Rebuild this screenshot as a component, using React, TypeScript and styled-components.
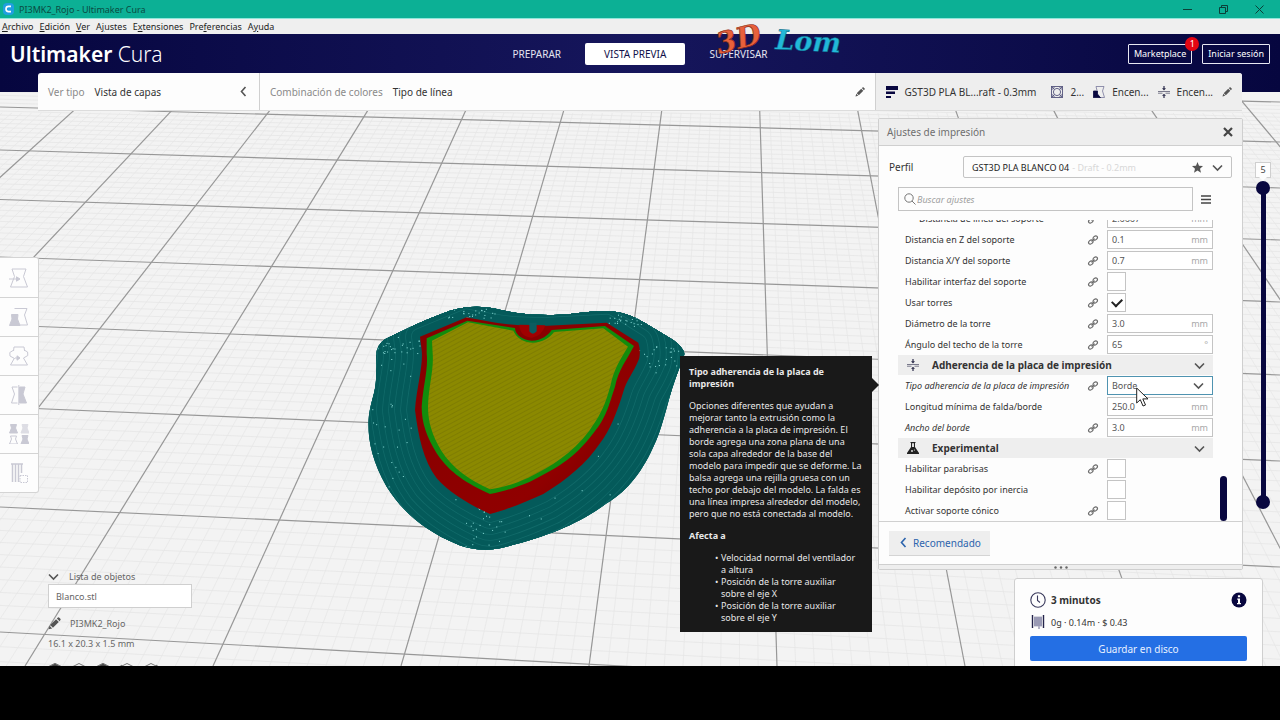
import React, { useState } from "react";
import styled, { createGlobalStyle, css } from "styled-components";

const navy = "#08073f";
const ink = "#333333";
const grey = "#8a8a8a";
const line = "#c4c4c4";

const GlobalStyle = createGlobalStyle`
  * { box-sizing: border-box; }
  body { margin: 0; background: #000; font-family: "Noto Sans", "Open Sans", sans-serif; font-size: 9px; color: ${ink}; }
  button, input, select { font: inherit; color: inherit; margin: 0; }
  button { padding: 0; border: 0; background: none; }
`;

/* ---------- window frame ---------- */

const Window = styled.div`
  display: flex;
  flex-direction: column;
  height: 100vh;
  overflow: hidden;
`;

const TitleBar = styled.header`
  flex: none;
  display: flex;
  align-items: center;
  gap: 5px;
  height: 19px;
  padding: 0 16px 0 3px;
  background: #0cb095;
  border-bottom: 1px solid #8fe6da;
  color: #0b4a42;
  white-space: nowrap;
`;

const WindowTitle = styled.span`
  flex: 1;
`;

const WindowButton = styled.button`
  display: flex;
  margin-left: 22px;
`;

const MenuBar = styled.nav`
  flex: none;
  display: flex;
  align-items: center;
  gap: 6px;
  height: 15px;
  padding-left: 2px;
  background: #efefef;
  color: #1e1e1e;
`;

const MenuItem = styled.button`
  line-height: 14px;
`;

const Stage = styled.main`
  position: relative;
  flex: 1;
  min-height: 0;
  display: flex;
  flex-direction: column;
  overflow: hidden;
  background: #f3f3f3;
`;

const Scene = styled.svg`
  position: absolute;
  inset: 0;
  width: 100%;
  height: 100%;
`;

const BottomBand = styled.div`
  flex: none;
  height: 54px;
  background: #000;
`;

/* ---------- app header ---------- */

const AppHeader = styled.div`
  position: relative;
  flex: none;
  display: grid;
  grid-template-columns: 1fr auto 1fr;
  align-items: center;
  height: 58px;
  padding: 0 10px 19px;
  background: linear-gradient(90deg, #06063f 0%, #16165c 50%, #06063f 100%);
  color: #fff;
`;

const Brand = styled.div`
  font-size: 21px;
  line-height: 24px;
  font-weight: 600;
`;

const BrandLight = styled.span`
  font-weight: 300;
`;

const Stages = styled.nav`
  display: flex;
  gap: 5px;
`;

const StageTab = styled.button<{ $active?: boolean }>`
  height: 22px;
  padding: 0 19px;
  border-radius: 2px;
  font-size: 10px;
  color: ${(p) => (p.$active ? "#10104a" : "#e4e4f0")};
  background: ${(p) => (p.$active ? "#fff" : "transparent")};
`;

const Account = styled.div`
  justify-self: end;
  display: flex;
  gap: 10px;
`;

const OutlineButton = styled.button`
  position: relative;
  height: 20px;
  padding: 0 5px;
  border: 1px solid #e8e8f2;
  border-radius: 1px;
  color: #fff;
`;

const Badge = styled.span`
  position: absolute;
  top: -8px;
  right: -8px;
  width: 14px;
  height: 14px;
  border-radius: 7px;
  line-height: 14px;
  background: #e30613;
`;

const Watermark = styled.svg`
  position: absolute;
  left: 715px;
  top: 18px;
`;

/* ---------- view bar ---------- */

const ViewBar = styled.div`
  position: relative;
  flex: none;
  display: flex;
  height: 38px;
  margin: -19px 38px 0;
  border-radius: 3px 3px 0 0;
  background: #fdfdfd;
  border-bottom: 1px solid #dcdcdc;
  overflow: hidden;
  font-size: 10px;
  white-space: nowrap;
`;

const BarSection = styled.button<{ $kind: "view" | "scheme" | "print" }>`
  display: flex;
  align-items: center;
  text-align: left;
  gap: 10px;
  padding: 0 10px;
  ${(p) => p.$kind === "view" && css`flex: 0 0 221px;`}
  ${(p) =>
    p.$kind === "scheme" &&
    css`
      flex: 1;
      border-left: 1px solid #d0d0d0;
    `}
  ${(p) =>
    p.$kind === "print" &&
    css`
      flex: 0 0 366px;
      gap: 7px;
      background: #eeeeee;
      border-left: 1px solid #d0d0d0;
    `}
`;

const Muted = styled.span`
  color: ${grey};
`;

const Push = styled.span`
  flex: 1;
`;

const Summary = styled.span<{ $role?: "profile" | "last" }>`
  flex: ${(p) => (p.$role === "last" ? "1" : "none")};
  margin-right: ${(p) => (p.$role === "profile" ? "8px" : "2px")};
`;

/* ---------- body ---------- */

const Body = styled.div`
  position: relative;
  flex: 1;
  min-height: 0;
  display: flex;
  justify-content: space-between;
  align-items: flex-start;
`;

const LeftSide = styled.div`
  display: flex;
  flex-direction: column;
  padding-top: 146px;
`;

const Tools = styled.div`
  width: 39px;
  background: #fdfdfd;
  border: 1px solid #d4d4d4;
  border-left: 0;
  border-radius: 0 3px 3px 0;
`;

const Tool = styled.button`
  display: flex;
  align-items: center;
  justify-content: center;
  width: 100%;
  height: 39px;
  color: #c9c9d4;
  & + & {
    border-top: 1px solid #d4d4d4;
  }
`;

const Objects = styled.section`
  display: flex;
  flex-direction: column;
  align-items: flex-start;
  margin: 75px 0 0 48px;
  color: #666;
`;

const ObjectsToggle = styled.button`
  display: flex;
  align-items: center;
  gap: 10px;
  height: 16px;
`;

const ObjectItem = styled.button`
  width: 144px;
  height: 24px;
  padding-left: 7px;
  text-align: left;
  background: #fff;
  border: 1px solid #cfcfcf;
`;

const JobName = styled.div`
  display: flex;
  align-items: center;
  gap: 9px;
  height: 30px;
`;

const Dimensions = styled.div`
  line-height: 12px;
`;

const Views = styled.div`
  display: flex;
  gap: 10px;
  margin-top: 13px;
`;

const RightSide = styled.div`
  display: flex;
  flex-direction: column;
  padding-top: 7px;
`;

const PanelRow = styled.div`
  display: flex;
`;

const Panel = styled.section`
  position: relative;
  width: 365px;
  background: #fdfdfd;
  border: 1px solid #cfcfcf;
  border-radius: 2px;
`;

const PanelHeader = styled.div`
  display: flex;
  align-items: center;
  justify-content: space-between;
  height: 27px;
  padding: 0 8px;
  background: #eeeeee;
  border-bottom: 1px solid #cfcfcf;
  font-size: 10px;
  color: #6f6f6f;
`;

const ProfileRow = styled.div`
  display: flex;
  align-items: center;
  justify-content: space-between;
  height: 22px;
  margin: 10px 10px 0;
  font-size: 10px;
`;

const ProfileButton = styled.button`
  display: flex;
  align-items: center;
  width: 269px;
  height: 22px;
  padding: 0 8px;
  border: 1px solid ${line};
  border-radius: 2px;
  font-size: 9px;
  color: #222;
`;

const ProfileHint = styled.span`
  flex: 1;
  padding-left: 3px;
  text-align: left;
  color: #d8d8d8;
`;

const Star = styled.svg`
  margin-right: 9px;
`;

const SearchRow = styled.div`
  display: flex;
  align-items: center;
  gap: 7px;
  margin: 9px 0 0 19px;
`;

const SearchBox = styled.label`
  display: flex;
  align-items: center;
  gap: 1px;
  width: 295px;
  height: 24px;
  padding-left: 5px;
  border: 1px solid ${line};
  color: #909090;
`;

const SearchInput = styled.input`
  flex: 1;
  min-width: 0;
  border: 0;
  outline: 0;
  padding: 0;
  background: none;
  &::placeholder {
    font-style: italic;
    color: #a0a0a0;
  }
`;

const IconButton = styled.button`
  display: flex;
  padding: 1px;
`;

const ListArea = styled.div`
  display: flex;
  justify-content: space-between;
  align-items: flex-end;
  height: 301px;
  margin-top: 9px;
  padding: 0 15px 0 19px;
  overflow: hidden;
`;

const List = styled.div`
  width: 315px;
`;

const ScrollThumb = styled.div`
  width: 7px;
  height: 45px;
  border-radius: 4px;
  background: ${navy};
`;

const Category = styled.button`
  display: flex;
  align-items: center;
  gap: 13px;
  width: 100%;
  height: 20px;
  padding: 0 8px 0 9px;
  background: #eeeeee;
  font-size: 10px;
  font-weight: 700;
`;

const CategoryName = styled.span`
  flex: 1;
  text-align: left;
`;

const Row = styled.div`
  display: grid;
  grid-template-columns: 1fr 24px 106px;
  align-items: center;
  height: 21px;
  padding-left: 7px;
`;

const RowLabel = styled.label<{ $italic?: boolean; $indent?: boolean }>`
  font-style: ${(p) => (p.$italic ? "italic" : "normal")};
  padding-left: ${(p) => (p.$indent ? "14px" : "0")};
  white-space: nowrap;
`;

const LinkCell = styled.span`
  display: flex;
  padding-left: 4px;
`;

const Field = styled.div<{ $focus?: boolean }>`
  display: flex;
  align-items: center;
  height: 19px;
  padding: 0 4px;
  background: #fff;
  border: 1px solid ${(p) => (p.$focus ? "#4f93b0" : line)};
  ${(p) => p.$focus && css`padding-right: 8px;`}
`;

const FieldInput = styled.input`
  flex: 1;
  min-width: 0;
  border: 0;
  outline: 0;
  padding: 0;
  background: none;
  color: #555;
`;

const FieldSelect = styled.select`
  flex: 1;
  appearance: none;
  border: 0;
  outline: 0;
  padding: 0;
  background: none;
  color: #555;
`;

const Unit = styled.span`
  color: #a8a8a8;
`;

const Check = styled.input`
  appearance: none;
  display: grid;
  place-items: center;
  width: 19px;
  height: 19px;
  background: #fff;
  border: 1px solid ${line};
  &:checked::before {
    content: "";
    width: 8px;
    height: 5px;
    margin-bottom: 3px;
    border: solid #222;
    border-width: 0 0 2px 2px;
    transform: rotate(-45deg);
  }
`;

const PanelFooter = styled.div`
  display: flex;
  align-items: center;
  height: 44px;
  padding-left: 10px;
  border-top: 1px solid #d0d0d0;
  border-bottom: 1px solid #cfcfcf;
`;

const Recommended = styled.button`
  display: flex;
  align-items: center;
  gap: 4px;
  height: 25px;
  padding: 0 9px;
  background: #eeeeee;
  border-bottom: 1px solid #d4d4d4;
  font-size: 10px;
  color: #2c64ad;
`;

const ResizeGrip = styled.div`
  display: flex;
  align-items: center;
  justify-content: center;
  height: 4px;
  background: #eeeeee;
`;

/* ---------- tooltip ---------- */

const Tooltip = styled.aside`
  position: absolute;
  top: 237px;
  right: calc(100% + 7px);
  width: 192px;
  padding: 10px 8px 8px 9px;
  background: #191919;
  color: #e8e8e8;
  line-height: 12px;
  &::after {
    content: "";
    position: absolute;
    top: 22px;
    left: 100%;
    border: 7px solid transparent;
    border-left-color: #191919;
    border-right-width: 0;
  }
`;

const TipTitle = styled.h2`
  margin: 0;
  font-size: 9px;
  font-weight: 700;
`;

const TipText = styled.p`
  margin: 10px 0;
`;

const TipList = styled.ul`
  list-style: none;
  margin: 10px 0 0;
  padding: 0 6px 0 32px;
`;

const TipItem = styled.li`
  &::before {
    content: "•";
    float: left;
    margin-left: -6px;
  }
`;

const Pointer = styled.svg`
  position: absolute;
  left: 257px;
  top: 268px;
`;

/* ---------- layer slider ---------- */

const LayerSlider = styled.div`
  display: flex;
  flex-direction: column;
  align-items: center;
  margin: 44px 9px 0 12px;
`;

const LayerLabel = styled.output`
  position: relative;
  width: 16px;
  height: 16px;
  text-align: center;
  line-height: 14px;
  background: #fdfdfd;
  border: 1px solid #cfcfcf;
  color: #444;
  &::after {
    content: "";
    position: absolute;
    top: 14px;
    left: 3px;
    border: 4px solid transparent;
    border-top-color: #fdfdfd;
    border-bottom-width: 0;
  }
`;

const Track = styled.div`
  position: relative;
  width: 14px;
  height: 328px;
  margin-top: 3px;
  background: linear-gradient(90deg, transparent 5px, ${navy} 5px, ${navy} 10px, transparent 10px);
  background-size: 100% 314px;
  background-position: 0 7px;
  background-repeat: no-repeat;
`;

const LayerRange = styled.input`
  appearance: none;
  position: absolute;
  inset: 0;
  width: 14px;
  height: 328px;
  writing-mode: vertical-lr;
  direction: rtl;
  background: none;
  pointer-events: none;
  &::-webkit-slider-thumb {
    appearance: none;
    pointer-events: auto;
    width: 14px;
    height: 14px;
    border-radius: 7px;
    background: ${navy};
  }
`;

/* ---------- job panel ---------- */

const Job = styled.section`
  align-self: flex-end;
  width: 249px;
  height: 120px;
  margin: 8px 17px 0 0;
  padding: 10px 15px;
  background: #fdfdfd;
  border: 1px solid #cfcfcf;
  border-radius: 3px;
`;

const JobLine = styled.div<{ $strong?: boolean }>`
  display: flex;
  align-items: center;
  gap: 5px;
  height: 22px;
  font-size: ${(p) => (p.$strong ? "10px" : "9px")};
  font-weight: ${(p) => (p.$strong ? 700 : 400)};
`;

const SaveButton = styled.button`
  width: 100%;
  height: 25px;
  margin-top: 3px;
  border-radius: 2px;
  background: #246fe4;
  font-size: 10px;
  color: #e9f1ff;
`;

/* ---------- icons ---------- */

const Chevron = ({ dir = "down", color = "#555" }: { dir?: "down" | "left"; color?: string }) => (
  <svg width="11" height="11" viewBox="0 0 11 11" fill="none" stroke={color} strokeWidth="1.6">
    <path d={dir === "down" ? "M1 3.5 5.5 8 10 3.5" : "M7.5 1 3.5 5.5 7.5 10"} />
  </svg>
);

const LinkIcon = () => (
  <svg width="12" height="12" viewBox="0 0 12 12" fill="none" stroke="#6a6a6a" strokeWidth="1.2">
    <ellipse cx="3.8" cy="8" rx="2.4" ry="1.8" transform="rotate(-40 3.8 8)" />
    <ellipse cx="8.2" cy="4" rx="2.4" ry="1.8" transform="rotate(-40 8.2 4)" />
    <path d="M4.4 7.4 7.6 4.6" />
  </svg>
);

const Pencil = ({ size = 10 }: { size?: number }) => (
  <svg width={size} height={size} viewBox="0 0 10 10" fill="#555">
    <path d="M0.5 9.5 1.2 6.8 3.2 8.8Z M1.7 6.2 6.2 1.7 8.3 3.8 3.8 8.3Z M6.8 1.1 7.6.4Q8.1 0 8.7.5L9.5 1.3Q10 1.9 9.6 2.4L8.9 3.2Z" />
  </svg>
);

const AdhesionIcon = () => (
  <svg width="12" height="12" viewBox="0 0 12 12" fill="none" stroke="#2b2b4a" strokeWidth="1">
    <path d="M0 5.5H12M0 7.2H4.5M7.5 7.2H12" opacity=".6" />
    <path d="M6 0V3M6 12V9" strokeWidth="1.2" />
    <path d="M4 2.2H8L6 4.5ZM4 9.8H8L6 7.8Z" fill="#2b2b4a" stroke="none" />
  </svg>
);

const FlaskIcon = () => (
  <svg width="12" height="12" viewBox="0 0 12 12" fill="#222">
    <path d="M3.5 0H8.5V1H8V5L12 11V12H0V11L4 5V1H3.5Z" />
    <path d="M5 1.2H7V5H5Z" fill="#ddd" />
    <circle cx="5" cy="9" r=".9" fill="#eee" />
    <circle cx="7.4" cy="8" r=".6" fill="#eee" />
  </svg>
);

const LayersIcon = () => (
  <svg width="12" height="12" viewBox="0 0 12 12" fill={navy}>
    <path d="M0 0H12V4H0ZM0 5.5H9V8H0ZM0 10H5V12H0Z" />
  </svg>
);

const InfillIcon = () => (
  <svg width="12" height="12" viewBox="0 0 12 12" fill="none" stroke="#55557d" strokeWidth=".9">
    <rect x=".5" y=".5" width="11" height="11" />
    <path d="M.5 4 4 .5M8 .5 11.5 4M11.5 8 8 11.5M4 11.5.5 8M.5.5 3.5 3.5M11.5.5 8.5 3.5M.5 11.5 3.5 8.5M11.5 11.5 8.5 8.5" />
    <circle cx="6" cy="6" r="3.6" />
  </svg>
);

const SupportIcon = () => (
  <svg width="12" height="12" viewBox="0 0 12 12" fill="none" stroke="#77779a" strokeWidth=".8">
    <path d="M3 .5H11L9.5 5 11.5 11.5H6" />
    <path d="M.5 5H4.5V8L7.5 11.8H.5Z" fill={navy} stroke={navy} />
    <path d="M3 .5 4 4.5" />
  </svg>
);

const tower = "M3 1H17L14.5 8.5 18.5 19H1.5L5.5 8.5Z";

const ToolIcon = ({ kind }: { kind: string }) => (
  <svg width="20" height="20" viewBox="0 0 20 20" fill="none" stroke="currentColor" strokeWidth="1">
    {kind === "mover" && (
      <>
        <path d={tower} />
        <path d="M0 11H8" />
        <path d="M7.5 8.8 11 11 7.5 13.2Z" fill="currentColor" />
      </>
    )}
    {kind === "escalar" && (
      <>
        <path d="M5.5 1.5H18L15.5 8 18.5 18H11" />
        <path d="M2.5 7.5H9L8.5 12 11 18.5H.5L3 12Z" fill="currentColor" />
      </>
    )}
    {kind === "rotar" && (
      <>
        <path d="M5 1H15L15.6 5M14.5 12 18.5 19H1.5L5.5 12M4.5 5 5 1" />
        <path d="M5.5 12.5 1 10 .8 6.5 4 4.5M14.5 12 18.8 9.5 18.6 6 16 4.5" />
        <path d="M6 12H8" />
        <path d="M8 9.8 11 12 8 14.2Z" fill="currentColor" />
      </>
    )}
    {kind === "espejo" && (
      <>
        <path d="M8.5 2H3L5.5 9 2.5 18H8.5" />
        <path d="M10.5 2H16L14 9 17.5 18H10.5Z" fill="currentColor" />
        <path d="M9.8 0V20" />
      </>
    )}
    {kind === "modelo" && (
      <>
        <path d="M1.5.5H7.5L6.5 4 8.5 9H.5L2.5 4Z" fill="currentColor" />
        <path d="M13 .5H19L18 4 20 9H12L14 4Z" fill="currentColor" opacity=".6" />
        <path d="M1.5 12H7.5L6.5 15 8.5 20H.5L2.5 15Z" />
        <path d="M13 11.5H19L18 15 20 20H12L14 15Z" fill="currentColor" />
      </>
    )}
    {kind === "soportes" && (
      <>
        <path d="M2 1H14M3.5 1V19M6.5 1V19M9.5 1V19M12.5 1V10" strokeWidth="1.5" />
        <path d="M11 12.5H18.5V19.5H11Z" strokeDasharray="1.5 1" />
      </>
    )}
  </svg>
);

/* ---------- 3D scene ---------- */

const verticals = Array.from({ length: 171 }, (_, n) => {
  const i = n / 10 - 2;
  return { x1: 71 + 98.4 * i, x2: 25 + 188 * (i - 3), major: n % 10 === 0 };
});

const leftEdge = [70, 107, 150, 199.5, 257, 325, 407, 507, 632, 790];
const rightEdge = [102, 142, 188, 240, 302, 375, 461, 567, 702, 870];

const horizontals = leftEdge.slice(0, -1).flatMap((y, i) =>
  Array.from({ length: 10 }, (_, k) => {
    const t = k / 10;
    const s = t * (0.92 + 0.08 * t);
    return {
      y1: y + (leftEdge[i + 1] - y) * s,
      y2: rightEdge[i] + (rightEdge[i + 1] - rightEdge[i]) * s,
      major: k === 0,
    };
  })
);

const brim =
  "M48 200Q48 165 75 148C150 110 220 80 270 62Q340 42 400 55C470 72 520 76 580 75C640 75 680 62 745 64C800 66 830 85 870 108L940 150Q970 172 974 192C965 215 948 260 935 300C920 350 905 420 880 470C840 560 790 610 740 640C650 705 560 740 420 775C370 785 320 775 290 762C200 725 130 670 80 590C40 520 25 460 25 400C28 340 45 320 48 270Z";
const wall =
  "M180 140 320 82C360 90 420 103 480 106L548 108 740 98 835 158Q842 180 838 205C820 250 800 270 790 305C770 370 750 420 720 460C680 520 620 570 550 612C500 635 440 660 390 672C330 645 270 610 230 565C190 510 175 440 165 360C170 290 190 230 185 180Z";
const inner =
  "M200 145 322 92 465 114C465 135 490 150 515 152C545 152 565 135 575 120L735 108 822 168C800 210 775 240 765 290C745 350 740 380 700 430C640 510 580 540 510 575C460 595 430 605 390 612C320 580 270 550 230 490C200 440 185 400 185 350C190 280 205 240 200 190Z";
const skin =
  "M216 152 324 97 460 122C470 146 495 158 518 158C548 158 568 144 582 126L730 115 804 170C780 210 760 240 752 285C735 345 725 370 688 422C635 492 575 528 505 563C460 583 425 594 390 598C330 570 280 538 244 482C216 436 204 395 204 350C206 285 222 240 218 190Z";

const sparks = Array.from({ length: 210 }, (_, i) => {
  const spots = [
    [110, 170, 70, 20], [880, 200, 80, 35], [375, 710, 60, 60], [330, 70, 90, 14],
    [790, 90, 60, 20], [95, 400, 60, 220], [500, 400, 470, 370], [500, 420, 470, 370],
  ];
  const [cx, cy, rx, ry] = spots[i % spots.length];
  const a = Math.sin(i * 127.1) * 43758.5453;
  const b = Math.sin(i * 311.7) * 24634.6345;
  return { x: cx + rx * 2 * (a - Math.floor(a) - 0.5), y: cy + ry * 2 * (b - Math.floor(b) - 0.5) };
});

const BuildPlate = () => (
  <Scene viewBox="0 34 1280 632" preserveAspectRatio="xMidYMid slice" aria-hidden="true">
    <defs>
      <clipPath id="brimClip"><path d={brim} /></clipPath>
      <pattern id="hatch" width="12" height="12" patternUnits="userSpaceOnUse" patternTransform="rotate(-28)">
        <rect width="12" height="12" fill="#8b8900" />
        <rect width="12" height="3" fill="#7f7d02" />
      </pattern>
      <linearGradient id="wallShade" x1="0" y1="0" x2="1" y2="1">
        <stop offset="0" stopColor="#850000" />
        <stop offset=".7" stopColor="#900000" />
        <stop offset="1" stopColor="#6a0000" />
      </linearGradient>
    </defs>
    <g stroke="#e6e6e6" strokeWidth=".8">
      {verticals.filter((v) => !v.major).map((v, i) => <line key={i} x1={v.x1} y1="113" x2={v.x2} y2="666" opacity=".8" />)}
      {horizontals.filter((h) => !h.major).map((h, i) => <line key={i} x1="0" y1={h.y1} x2="1280" y2={h.y2} />)}
    </g>
    <g stroke="#979797" strokeWidth="1.2">
      {verticals.filter((v) => v.major).map((v, i) => (
        <line key={i} x1={v.x1 - (v.x2 - v.x1) * 0.05} y1="85.35" x2={v.x2} y2="666" />
      ))}
      {horizontals.filter((h) => h.major).map((h, i) => <line key={i} x1="0" y1={h.y1} x2="1280" y2={h.y2} />)}
    </g>
    <g transform="translate(360 290) scale(.33333)">
      <path d={brim} fill="#045a5a" />
      <g clipPath="url(#brimClip)" fill="none" strokeLinejoin="round">
        {[300, 264, 228, 192, 156, 120, 84, 48].map((w) => (
          <React.Fragment key={w}>
            <path d={wall} stroke="#116a69" strokeWidth={w + 5} />
            <path d={wall} stroke="#045a5a" strokeWidth={w} />
          </React.Fragment>
        ))}
        <g fill="#8fe0dc">
          {sparks.map((s, i) => <rect key={i} x={s.x} y={s.y} width="3" height="3" />)}
        </g>
      </g>
      <path d={wall} fill="url(#wallShade)" />
      <path d={inner} fill="#128c0c" />
      <path d="M478 104Q480 140 515 143Q545 140 556 106Z" fill="#a00000" />
      <path d="M508 98H530V124Q518 138 508 124Z" fill="#0c5c60" />
      <path d={skin} fill="url(#hatch)" />
    </g>
  </Scene>
);

/* ---------- settings data ---------- */

type Setting =
  | { type: "category"; name: string; icon: "adhesion" | "flask" }
  | { type: "value"; name: string; value: string; unit: string; link?: boolean; italic?: boolean; indent?: boolean }
  | { type: "check"; name: string; on?: boolean; link?: boolean }
  | { type: "select"; name: string; options: string[] };

const settings: Setting[] = [
  { type: "value", name: "Distancia de línea del soporte", value: "2.6667", unit: "mm", link: true, indent: true },
  { type: "value", name: "Distancia en Z del soporte", value: "0.1", unit: "mm", link: true },
  { type: "value", name: "Distancia X/Y del soporte", value: "0.7", unit: "mm", link: true },
  { type: "check", name: "Habilitar interfaz del soporte", link: true },
  { type: "check", name: "Usar torres", on: true, link: true },
  { type: "value", name: "Diámetro de la torre", value: "3.0", unit: "mm", link: true },
  { type: "value", name: "Ángulo del techo de la torre", value: "65", unit: "°", link: true },
  { type: "category", name: "Adherencia de la placa de impresión", icon: "adhesion" },
  { type: "select", name: "Tipo adherencia de la placa de impresión", options: ["Borde", "Falda", "Balsa", "Ninguno"] },
  { type: "value", name: "Longitud mínima de falda/borde", value: "250.0", unit: "mm" },
  { type: "value", name: "Ancho del borde", value: "3.0", unit: "mm", link: true, italic: true },
  { type: "category", name: "Experimental", icon: "flask" },
  { type: "check", name: "Habilitar parabrisas", link: true },
  { type: "check", name: "Habilitar depósito por inercia" },
  { type: "check", name: "Activar soporte cónico", link: true },
];

const SettingRow = ({ item, id }: { item: Setting; id: string }) => {
  if (item.type === "category") {
    return (
      <Category>
        {item.icon === "adhesion" ? <AdhesionIcon /> : <FlaskIcon />}
        <CategoryName>{item.name}</CategoryName>
        <Chevron />
      </Category>
    );
  }
  const linked = item.type === "select" || item.link;
  return (
    <Row>
      <RowLabel
        htmlFor={id}
        $italic={item.type === "select" || (item.type === "value" && item.italic)}
        $indent={item.type === "value" && item.indent}
      >
        {item.name}
      </RowLabel>
      <LinkCell>{linked && <LinkIcon />}</LinkCell>
      {item.type === "value" && (
        <Field>
          <FieldInput id={id} defaultValue={item.value} />
          <Unit>{item.unit}</Unit>
        </Field>
      )}
      {item.type === "check" && <Check id={id} type="checkbox" defaultChecked={item.on} />}
      {item.type === "select" && (
        <Field $focus>
          <FieldSelect id={id}>
            {item.options.map((o) => <option key={o}>{o}</option>)}
          </FieldSelect>
          <Chevron />
        </Field>
      )}
    </Row>
  );
};

const menus: [string, string, string][] = [
  ["", "A", "rchivo"], ["", "E", "dición"], ["", "V", "er"], ["A", "j", "ustes"],
  ["E", "x", "tensiones"], ["Pre", "f", "erencias"], ["A", "y", "uda"],
];

const tools = ["mover", "escalar", "rotar", "espejo", "modelo", "soportes"];

export default function App() {
  const [top, setTop] = useState(5);
  const [bottom, setBottom] = useState(1);
  return (
    <Window>
      <GlobalStyle />
      <TitleBar>
        <svg width="11" height="12" viewBox="0 0 11 12">
          <rect width="11" height="12" rx="4" fill="#1f9fe0" />
          <path d="M8 3.4H5.5Q3 3.4 3 6T5.5 8.6H8" fill="none" stroke="#fff" strokeWidth="1.6" />
        </svg>
        <WindowTitle>PI3MK2_Rojo - Ultimaker Cura</WindowTitle>
        <WindowButton aria-label="Minimizar">
          <svg width="9" height="9" stroke="#0b3f38"><path d="M0 4.5H9" /></svg>
        </WindowButton>
        <WindowButton aria-label="Restaurar">
          <svg width="9" height="9" fill="none" stroke="#0b3f38"><path d="M.5 2.5H6.5V8.5H.5ZM2.5 2.5V.5H8.5V6.5H6.5" /></svg>
        </WindowButton>
        <WindowButton aria-label="Cerrar">
          <svg width="9" height="9" stroke="#0b3f38"><path d="M.5.5 8.5 8.5M8.5.5.5 8.5" /></svg>
        </WindowButton>
      </TitleBar>
      <MenuBar>
        {menus.map(([a, u, b]) => (
          <MenuItem key={a + u + b}>{a}<u>{u}</u>{b}</MenuItem>
        ))}
      </MenuBar>

      <Stage>
        <BuildPlate />
        <AppHeader>
          <Brand>Ultimaker <BrandLight>Cura</BrandLight></Brand>
          <Stages>
            <StageTab>PREPARAR</StageTab>
            <StageTab $active>VISTA PREVIA</StageTab>
            <StageTab>SUPERVISAR</StageTab>
          </Stages>
          <Account>
            <OutlineButton>Marketplace<Badge>1</Badge></OutlineButton>
            <OutlineButton>Iniciar sesión</OutlineButton>
          </Account>
        </AppHeader>

        <ViewBar>
          <BarSection $kind="view">
            <Muted>Ver tipo</Muted>
            <span>Vista de capas</span>
            <Push />
            <Chevron dir="left" />
          </BarSection>
          <BarSection $kind="scheme">
            <Muted>Combinación de colores</Muted>
            <span>Tipo de línea</span>
            <Push />
            <Pencil />
          </BarSection>
          <BarSection $kind="print">
            <LayersIcon />
            <Summary $role="profile">GST3D PLA BL...raft - 0.3mm</Summary>
            <InfillIcon />
            <Summary>2...</Summary>
            <SupportIcon />
            <Summary>Encen...</Summary>
            <AdhesionIcon />
            <Summary $role="last">Encen...</Summary>
            <Pencil />
          </BarSection>
        </ViewBar>

        <Body>
          <LeftSide>
            <Tools>
              {tools.map((t) => (
                <Tool key={t} aria-label={t}><ToolIcon kind={t} /></Tool>
              ))}
            </Tools>
            <Objects>
              <ObjectsToggle><Chevron />Lista de objetos</ObjectsToggle>
              <ObjectItem>Blanco.stl</ObjectItem>
              <JobName><Pencil size={13} />PI3MK2_Rojo</JobName>
              <Dimensions>16.1 x 20.3 x 1.5 mm</Dimensions>
              <Views>
                {[0, 1, 2, 3, 4].map((n) => (
                  <svg key={n} width="14" height="14" viewBox="0 0 14 14" fill="none" stroke="#777">
                    <path d="M7 .5 13 3.5V10.5L7 13.5 1 10.5V3.5Z" />
                    {n === 0 && <path d="M7 .5 13 3.5 7 6.5 1 3.5Z" fill="#444" />}
                    {n === 2 && <path d="M7 .5 13 3.5 7 6.5V13L1 10V3.5Z" fill="#444" />}
                    {n === 3 && <path d="M1 2 7 6.5V13L1 10Z" fill="#444" />}
                    {n === 4 && <path d="M13 2 7 6.5V13L13 10Z" fill="#444" />}
                  </svg>
                ))}
              </Views>
            </Objects>
          </LeftSide>

          <RightSide>
            <PanelRow>
              <Panel>
                <PanelHeader>
                  Ajustes de impresión
                  <IconButton aria-label="Cerrar ajustes">
                    <svg width="10" height="10" stroke="#444" strokeWidth="2.2"><path d="M1 1 9 9M9 1 1 9" /></svg>
                  </IconButton>
                </PanelHeader>
                <ProfileRow>
                  Perfil
                  <ProfileButton>
                    GST3D PLA BLANCO 04
                    <ProfileHint>- Draft - 0.2mm</ProfileHint>
                    <Star width="11" height="11" viewBox="0 0 22 22" fill="#555">
                      <path d="M11 0 14 7.5 22 8 16 13.3 18 21.5 11 17 4 21.5 6 13.3 0 8 8 7.5Z" />
                    </Star>
                    <Chevron />
                  </ProfileButton>
                </ProfileRow>
                <SearchRow>
                  <SearchBox>
                    <svg width="12" height="12" viewBox="0 0 12 12" fill="none" stroke="#777">
                      <circle cx="5" cy="5" r="4.2" />
                      <path d="M8 8 11.5 11.5" />
                    </svg>
                    <SearchInput placeholder="Buscar ajustes" aria-label="Buscar ajustes" />
                  </SearchBox>
                  <IconButton aria-label="Visibilidad de ajustes">
                    <svg width="10" height="9" stroke="#444" strokeWidth="1.5"><path d="M0 1H10M0 4.5H10M0 8H10" /></svg>
                  </IconButton>
                </SearchRow>
                <ListArea>
                  <List>
                    {settings.map((s, i) => <SettingRow key={s.name} item={s} id={`setting-${i}`} />)}
                  </List>
                  <ScrollThumb />
                </ListArea>
                <PanelFooter>
                  <Recommended><Chevron dir="left" color="#2c64ad" />Recomendado</Recommended>
                </PanelFooter>
                <ResizeGrip>
                  <svg width="14" height="3" fill="#666"><circle cx="1.5" cy="1.5" r="1.2" /><circle cx="7" cy="1.5" r="1.2" /><circle cx="12.5" cy="1.5" r="1.2" /></svg>
                </ResizeGrip>
                <Tooltip role="tooltip">
                  <TipTitle>Tipo adherencia de la placa de impresión</TipTitle>
                  <TipText>
                    Opciones diferentes que ayudan a mejorar tanto la extrusión como la adherencia a la placa de
                    impresión. El borde agrega una zona plana de una sola capa alrededor de la base del modelo para
                    impedir que se deforme. La balsa agrega una rejilla gruesa con un techo por debajo del modelo. La
                    falda es una línea impresa alrededor del modelo, pero que no está conectada al modelo.
                  </TipText>
                  <TipTitle>Afecta a</TipTitle>
                  <TipList>
                    <TipItem>Velocidad normal del ventilador a altura</TipItem>
                    <TipItem>Posición de la torre auxiliar sobre el eje X</TipItem>
                    <TipItem>Posición de la torre auxiliar sobre el eje Y</TipItem>
                  </TipList>
                </Tooltip>
                <Pointer width="13" height="20" viewBox="0 0 13 20">
                  <path d="M.7 1V16L4.3 12.7 7 19 9.5 18 6.8 11.9H12Z" fill="#fff" stroke="#222" />
                </Pointer>
              </Panel>
              <LayerSlider>
                <LayerLabel>{top}</LayerLabel>
                <Track>
                  <LayerRange type="range" min={1} max={5} value={top} aria-label="Capa superior" onChange={(e) => setTop(+e.target.value)} />
                  <LayerRange type="range" min={1} max={5} value={bottom} aria-label="Capa inferior" onChange={(e) => setBottom(+e.target.value)} />
                </Track>
              </LayerSlider>
            </PanelRow>
            <Job>
              <JobLine $strong>
                <svg width="16" height="16" viewBox="0 0 16 16" fill="none" stroke="#3a3a5c" strokeWidth="1.1">
                  <circle cx="8" cy="8" r="7.2" />
                  <path d="M7.5 3.5V8.5L10 10.5" />
                </svg>
                3 minutos
                <Push />
                <svg width="16" height="16" viewBox="0 0 16 16">
                  <circle cx="8" cy="8" r="7.5" fill={navy} />
                  <path d="M6.2 6.5H9V11H10V12.3H6V11H7V7.8H6.2ZM6.9 3.2H9.1V5.3H6.9Z" fill="#fff" />
                </svg>
              </JobLine>
              <JobLine>
                <svg width="16" height="14" viewBox="0 0 16 14">
                  <path d="M2.5 0V13M13.5 0V13" stroke="#23234a" strokeWidth="1.4" />
                  <path d="M4 2H12V11H4Z" fill="#c4c4d4" />
                  <path d="M5 1.5V11.5M7 1.5V11.5M9 1.5V14M11 1.5V11.5" stroke="#77779a" strokeWidth="1.1" />
                </svg>
                0g · 0.14m · $ 0.43
              </JobLine>
              <SaveButton>Guardar en disco</SaveButton>
            </Job>
          </RightSide>
        </Body>
      </Stage>
      <BottomBand />
      <Watermark width="150" height="42" viewBox="0 0 150 42" role="img" aria-label="3D Lom">
        <g fontFamily="DejaVu Serif, serif" fontStyle="italic" fontWeight="700">
          <text x="4" y="36" fontSize="29" fill="#e8603c" stroke="#8c2f18" strokeWidth=".7" transform="rotate(-14 4 36)">3D</text>
          <text x="60" y="31" fontSize="27" fill="#22b8d8" stroke="#0b6f8c" strokeWidth=".5" transform="rotate(3 60 31)">Lom</text>
        </g>
      </Watermark>
    </Window>
  );
}
